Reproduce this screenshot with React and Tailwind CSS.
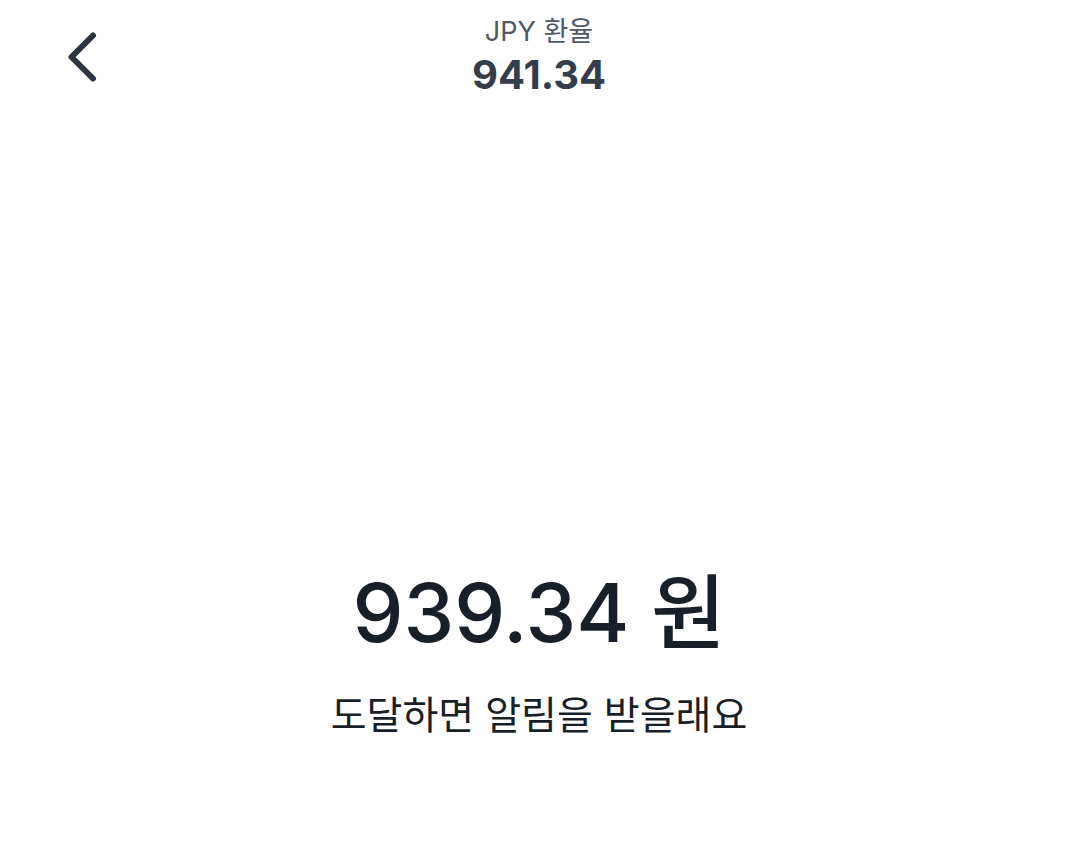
export default function App() {
  return (
    <div
      className="w-[1078px] h-[863px] bg-white text-[#191f28] flex flex-col"
      style={{ fontFamily: 'Inter, "Noto Sans CJK KR", sans-serif' }}
    >
      <header className="relative h-[110px] flex flex-col items-center pt-[15px]">
        <button className="absolute left-[64px] top-[30px] w-[36px] h-[54px] flex items-center justify-center">
          <svg width="36" height="54" viewBox="0 0 36 54" fill="none">
            <path d="M29 5.5 L7.5 27 L29 48.5" stroke="#2b3440" strokeWidth="6" strokeLinecap="round" strokeLinejoin="round" />
          </svg>
        </button>
        <div className="text-[27px] leading-[34px] text-[#4e5968]">JPY 환율</div>
        <div className="mt-[2px] text-[40px] leading-[48px] font-bold text-[#333d4b]">941.34</div>
      </header>

      <main className="flex-1 flex flex-col items-center pt-[453px]">
        <div className="text-[81px] leading-[100px] font-medium">939.34 원</div>
        <div className="mt-[27px] text-[39px] leading-[50px] text-[#191f28]">도달하면 알림을 받을래요</div>
      </main>
    </div>
  );
}
